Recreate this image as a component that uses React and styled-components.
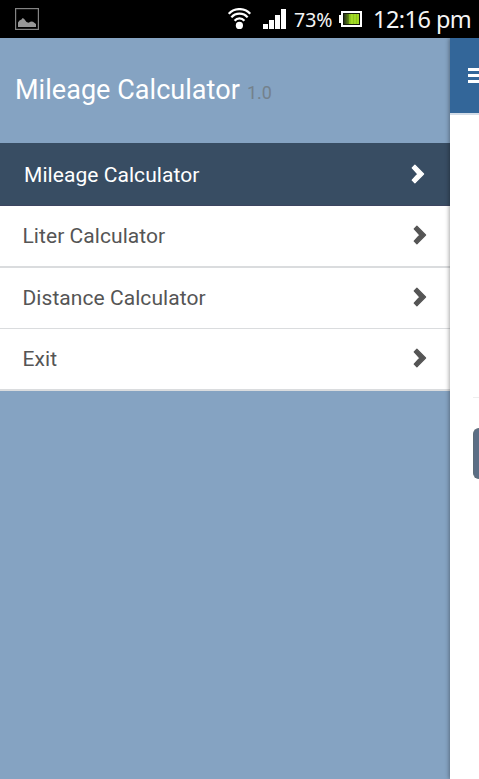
import React from "react";
import styled, { createGlobalStyle } from "styled-components";

const GlobalStyle = createGlobalStyle`
  * { box-sizing: border-box; }
  body { margin: 0; background: #fff; overflow: hidden; }
`;

const Screen = styled.div`
  width: 479px;
  height: 779px;
  display: flex;
  flex-direction: column;
  overflow: hidden;
  font-family: Roboto, sans-serif;
`;

const StatusBar = styled.header`
  height: 38px;
  flex: none;
  display: flex;
  align-items: center;
  background: #000;
  color: #f4f4f4;
  font-family: "Noto Sans", sans-serif;
  padding: 0 7px 0 15px;
  svg { display: block; flex: none; }
`;

const Spacer = styled.div`
  flex: 1;
`;

const StatusText = styled.span`
  font-size: ${(p) => p.$size}px;
  line-height: 38px;
  width: ${(p) => p.$width}px;
  margin-left: ${(p) => p.$gap}px;
  padding-top: ${(p) => p.$drop || 0}px;
  letter-spacing: ${(p) => p.$track || 0}px;
  white-space: nowrap;
  flex: none;
`;

const BatteryIcon = styled.svg`
  margin-left: 6px;
`;

const SignalIcon = styled.svg`
  margin-left: 11px;
`;

const Body = styled.div`
  flex: 1;
  display: flex;
  min-height: 0;
`;

const Drawer = styled.nav`
  width: 450px;
  flex: none;
  background: #85a3c2;
`;

const DrawerHeader = styled.div`
  height: 105px;
  padding: 0 15px;
  display: flex;
  align-items: baseline;
  line-height: 105px;
  white-space: nowrap;
`;

const Title = styled.h1`
  margin: 0;
  font-size: 27px;
  font-weight: 400;
  line-height: inherit;
  color: #fff;
  width: 232px;
  letter-spacing: 0.04px;
`;

const Version = styled.span`
  font-size: 18px;
  color: #74818c;
`;

const MenuItem = styled.a`
  height: ${(p) => p.$height}px;
  display: flex;
  align-items: center;
  justify-content: space-between;
  padding: 0 ${(p) => (p.$active ? 25 : 23)}px 0 ${(p) => (p.$active ? 24 : 22.5)}px;
  font-size: 21px;
  color: ${(p) => (p.$active ? "#fff" : "#555")};
  background: ${(p) => (p.$active ? "#384d63" : "#fff")};
  border-bottom: ${(p) => p.$line}px solid ${(p) => (p.$active ? "#3c4560" : "#dadcde")};
  svg { display: block; margin-bottom: ${(p) => (p.$active ? 1 : 2)}px; }
`;

const ItemLabel = styled.span`
  line-height: 24px;
  letter-spacing: 0.06px;
  padding-top: ${(p) => (p.$active ? 2 : 0)}px;
`;

const Page = styled.main`
  flex: 1;
  min-width: 0;
  position: relative;
  background: #fff;
  box-shadow: -1px 0 4px rgba(0, 0, 0, 0.34);
  clip-path: inset(0 0 0 -8px);
`;

const PageHeader = styled.div`
  height: 77px;
  padding: 30px 0 0 18px;
  background: #336699;
  border-bottom: 2px solid #d3dce7;
  overflow: hidden;
  svg { display: block; }
`;

const Form = styled.div`
  margin: 282px 0 0 23px;
  border-top: 1px solid #eee;
  padding-top: 30px;
`;

const Button = styled.div`
  height: 51px;
  border-radius: 6px 0 0 6px;
  border: 1px solid #5d6c78;
  border-right: 0;
  background: #5b6e85;
`;

const Chevron = () => (
  <svg width="14" height="20" viewBox="0 0 14 20">
    <path
      d="M3.9 1.2 L12.6 10 L3.9 18.8 L1.2 16.1 L6.8 10 L1.2 3.9 Z"
      fill="currentColor"
      stroke="currentColor"
      strokeWidth="1.2"
      strokeLinejoin="round"
    />
  </svg>
);

const items = [
  { label: "Mileage Calculator", height: 63, line: 1, active: true },
  { label: "Liter Calculator", height: 62, line: 2 },
  { label: "Distance Calculator", height: 61, line: 1 },
  { label: "Exit", height: 62, line: 2 },
];

export default function App() {
  return (
    <>
      <GlobalStyle />
      <Screen>
        <StatusBar>
          <svg width="24" height="22" viewBox="0 0 24 22">
            <rect x=".6" y=".6" width="22.8" height="20.8" fill="none" stroke="#848484" strokeWidth="1.2" />
            <path d="M3 19v-4.5l1.5-2 2-1 1.2-1.5 1.5 1 2.3 3 2 .8 2.5-1.3 2 .2 3 2.3v3z" fill="#989898" />
          </svg>
          <Spacer />
          <svg width="24" height="22" viewBox="0 0 24 22" fill="none" stroke="#fff" strokeWidth="2.2">
            <path d="M.8 5.8C6-.5 17-.5 22.2 5.8M3.4 9.4c4-5 12.2-5 16.2 0M6.6 12.7c2.6-3.2 7.2-3.2 9.8 0" />
            <circle cx="11.4" cy="17.4" r="3.6" fill="#fff" stroke="none" />
          </svg>
          <SignalIcon width="24" height="20" viewBox="0 0 24 20" fill="#fff">
            <path d="M0 15h5v5H0zM6 11h5v9H6zM12 6h5v14h-5zM18 0h5v20h-5z" />
          </SignalIcon>
          <StatusText $size={19.5} $width={39} $gap={7} $drop={1}>73%</StatusText>
          <BatteryIcon width="24" height="16" viewBox="0 0 24 16">
            <defs>
              <linearGradient id="charge">
                <stop offset="0" stopColor="#26301a" />
                <stop offset=".3" stopColor="#5d8412" />
                <stop offset=".4" stopColor="#a3dc28" />
                <stop offset="1" stopColor="#9fd820" />
              </linearGradient>
            </defs>
            <path d="M2 0h21v16H2v-4H0V4h2z" fill="#fff" />
            <path d="M4 2h17v12H4z" fill="#141a0c" />
            <path d="M5 3h15v10H5z" fill="url(#charge)" />
            <path d="M11.5 3v10M14.5 3v10M17.5 3v10" stroke="#75a915" strokeWidth=".4" />
          </BatteryIcon>
          <StatusText $size={23.5} $width={99} $gap={10} $track={-0.55}>12:16 pm</StatusText>
        </StatusBar>
        <Body>
          <Drawer>
            <DrawerHeader>
              <Title>Mileage Calculator</Title>
              <Version>1.0</Version>
            </DrawerHeader>
            {items.map((it) => (
              <MenuItem key={it.label} $height={it.height} $line={it.line} $active={it.active}>
                <ItemLabel $active={it.active}>{it.label}</ItemLabel>
                <Chevron />
              </MenuItem>
            ))}
          </Drawer>
          <Page>
            <PageHeader>
              <svg width="18" height="15" viewBox="0 0 18 15" fill="#fff">
                <path d="M0 0h18v3H0zM0 6h18v3H0zM0 12h18v3H0z" />
              </svg>
            </PageHeader>
            <Form>
              <Button />
            </Form>
          </Page>
        </Body>
      </Screen>
    </>
  );
}
